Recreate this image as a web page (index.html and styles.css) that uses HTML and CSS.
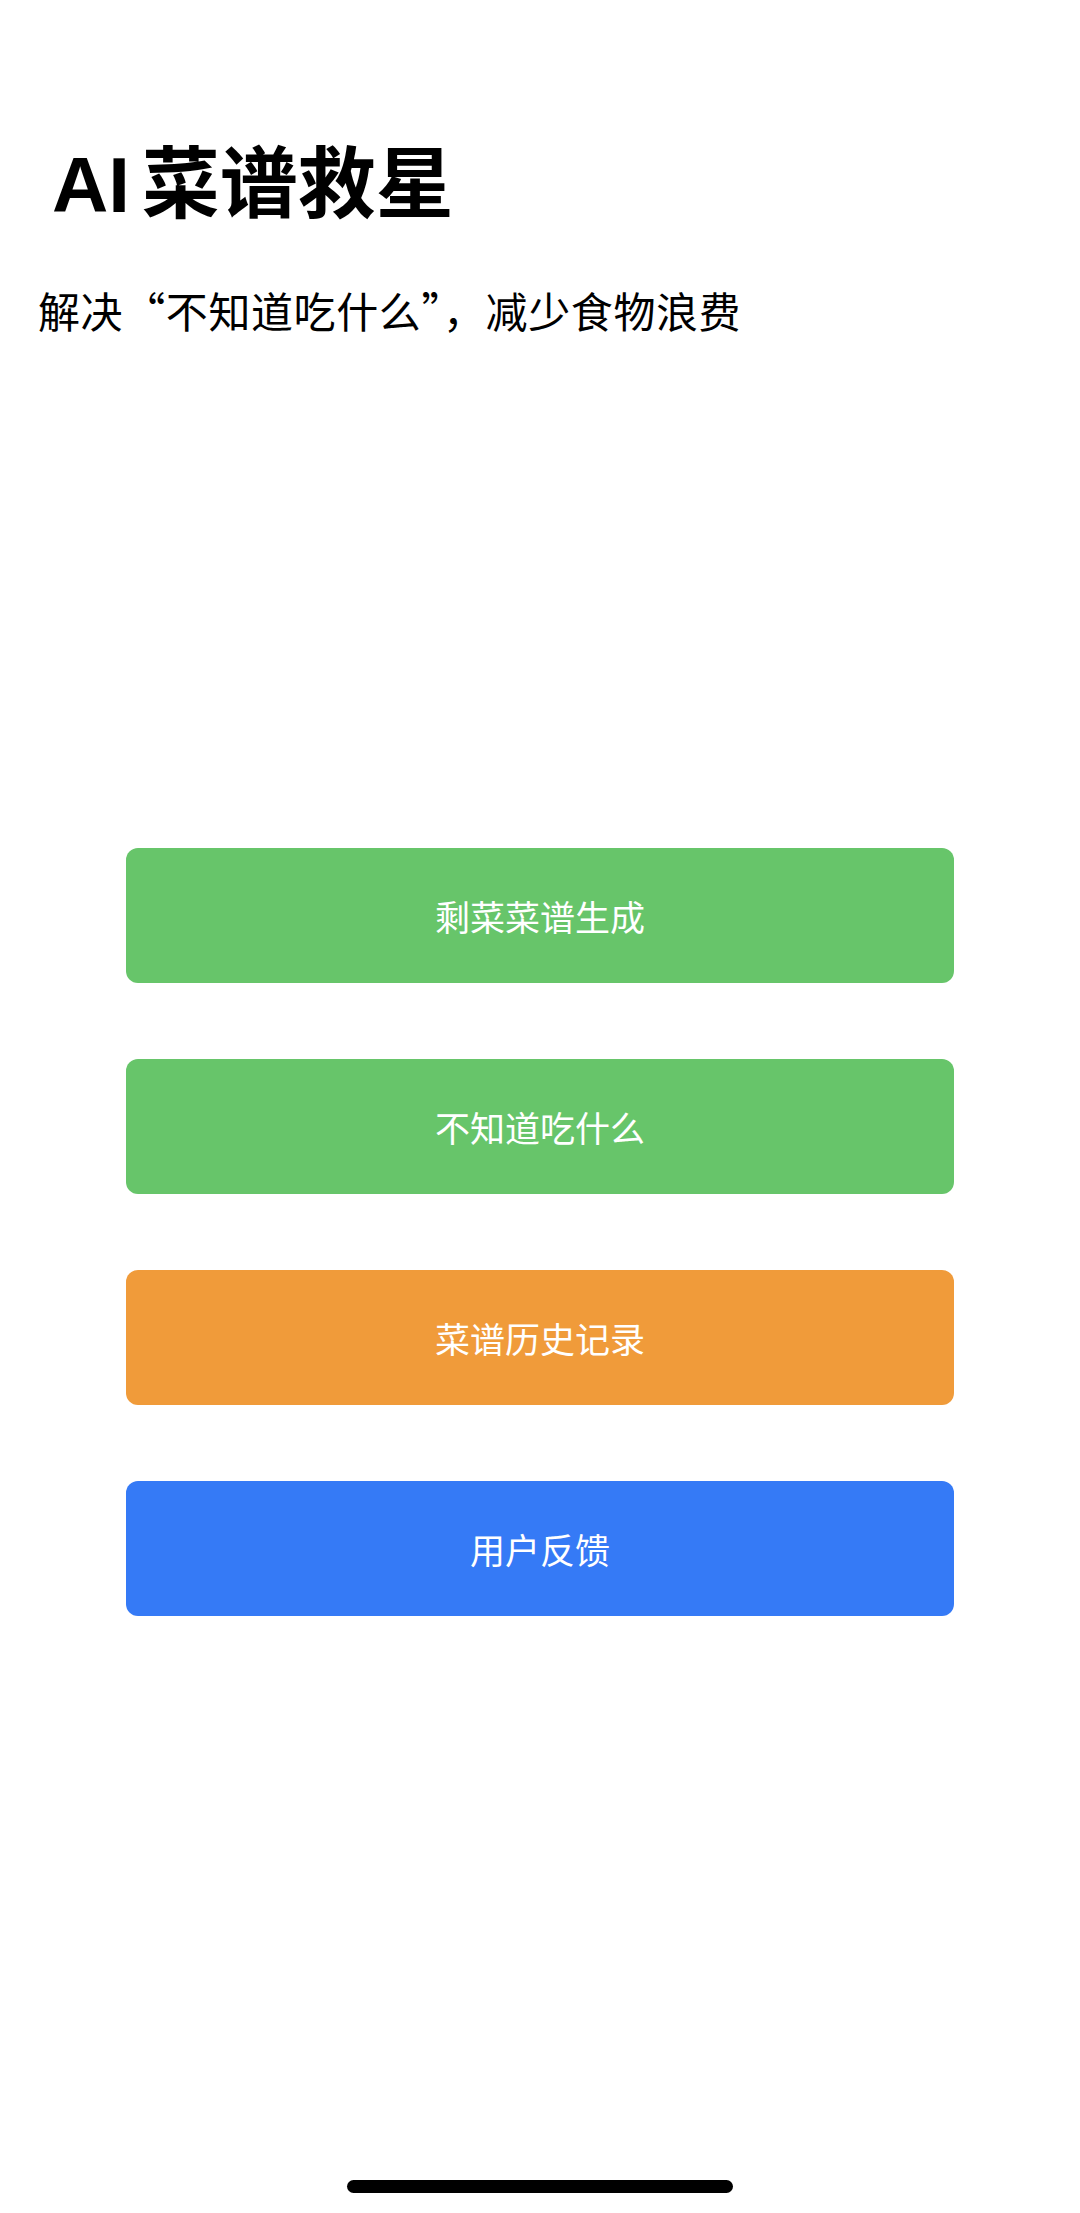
FILE: index.html
```html
<!DOCTYPE HTML>
<html>
<head>
    <meta charset="utf-8">
    <title>AI菜谱救星</title>
    <link rel="stylesheet" href="styles.css">
</head>
<body>
	<div class="screen">
		<div class="header">
			<h1 class="title">AI 菜谱救星</h1>
			<p class="subtitle">解决“不知道吃什么”，减少食物浪费</p>
		</div>

		<div class="menu">
			<button class="btn btn-green">剩菜菜谱生成</button>
			<button class="btn btn-green">不知道吃什么</button>
			<button class="btn btn-orange">菜谱历史记录</button>
			<button class="btn btn-blue">用户反馈</button>
		</div>

		<div class="home-bar"></div>
	</div>
</body>
</html>
```

FILE: styles.css
```css
		html, body{
			margin: 0;
			padding: 0;
			background-color: #ffffff;
		}

		.screen{
			width: 1080px;
			height: 2213px;
			display: flex;
			flex-direction: column;
			font-family: "Liberation Sans", "Noto Sans CJK SC", sans-serif;
			color: #000000;
		}

		.header{
			height: 374px;
			padding: 146px 0 0 38px;
			box-sizing: border-box;
		}

		.title{
			margin: 0 0 0 14px;
			font-size: 78px;
			line-height: 1;
			font-weight: bold;
			word-spacing: -10px;
		}

		.subtitle{
			margin: 61px 0 0 0;
			font-family: "Noto Sans CJK SC", sans-serif;
			font-size: 42px;
			letter-spacing: 0.6px;
			line-height: 1.2;
		}

		.menu{
			display: flex;
			flex-direction: column;
			gap: 76px;
			padding: 0 126px;
			margin-top: 474px;
		}

		.btn{
			height: 135px;
			border: none;
			border-radius: 12px;
			color: #ffffff;
			font-family: "Noto Sans CJK SC", sans-serif;
			font-size: 35px;
			cursor: pointer;
		}

		.btn-green{
			background-color: #67c56a;
		}

		.btn-orange{
			background-color: #f09b3a;
		}

		.btn-blue{
			background-color: #357af6;
		}

		.home-bar{
			margin: auto auto 20px auto;
			width: 386px;
			height: 13px;
			border-radius: 7px;
			background-color: #000000;
		}
```
